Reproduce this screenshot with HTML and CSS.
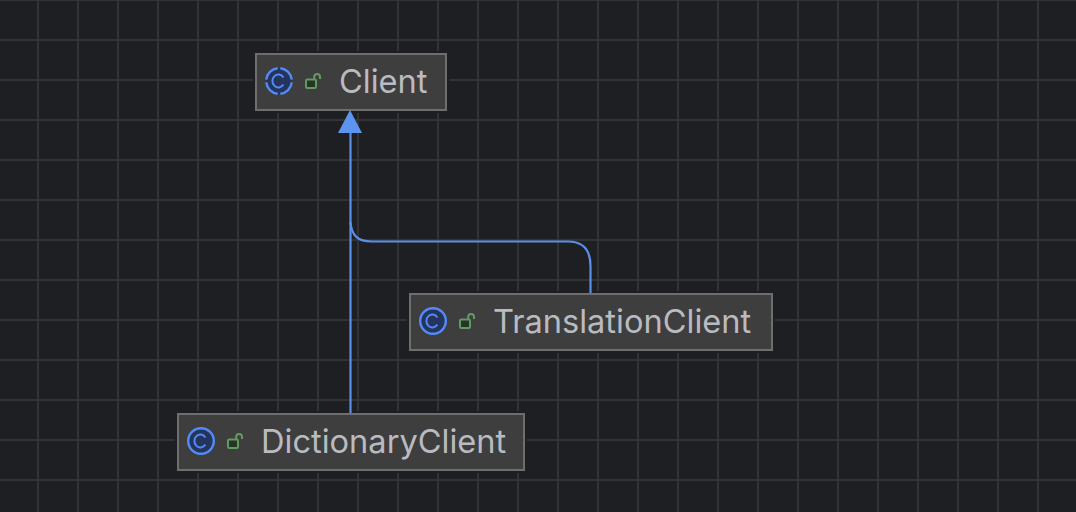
FILE: index.html
```html
<!DOCTYPE html>
<html lang="en">
<head>
<meta charset="utf-8">
<title>Class diagram</title>
<link rel="stylesheet" href="styles.css">
</head>
<body>
<main class="canvas">
  <div class="node node-client">
    <svg class="class-icon" width="28" height="28" viewBox="0 0 28 28" aria-hidden="true">
      <circle class="ring ring-dashed" cx="14" cy="14" r="12.800" pathLength="100"/>
      <path class="letter" d="M18.400 10.400A6 6.500 0 1 0 18.400 17.600"/>
    </svg>
    <svg class="lock-icon" width="18" height="18" viewBox="0 0 18 18" aria-hidden="true">
      <rect class="lock-body" x="1" y="6.500" width="10" height="8.500" rx="1.200"/>
      <path class="lock-bar" d="M9.200 6.500V3.900A2.900 2.900 0 0 1 15 3.900V6"/>
    </svg>
    <span class="label">Client</span>
  </div>

  <div class="node node-translation">
    <svg class="class-icon" width="28" height="28" viewBox="0 0 28 28" aria-hidden="true">
      <circle class="ring" cx="14" cy="14" r="12.800"/>
      <path class="letter" d="M18.400 10.400A6 6.500 0 1 0 18.400 17.600"/>
    </svg>
    <svg class="lock-icon" width="18" height="18" viewBox="0 0 18 18" aria-hidden="true">
      <rect class="lock-body" x="1" y="6.500" width="10" height="8.500" rx="1.200"/>
      <path class="lock-bar" d="M9.200 6.500V3.900A2.900 2.900 0 0 1 15 3.900V6"/>
    </svg>
    <span class="label">TranslationClient</span>
  </div>

  <div class="node node-dictionary">
    <svg class="class-icon" width="28" height="28" viewBox="0 0 28 28" aria-hidden="true">
      <circle class="ring" cx="14" cy="14" r="12.800"/>
      <path class="letter" d="M18.400 10.400A6 6.500 0 1 0 18.400 17.600"/>
    </svg>
    <svg class="lock-icon" width="18" height="18" viewBox="0 0 18 18" aria-hidden="true">
      <rect class="lock-body" x="1" y="6.500" width="10" height="8.500" rx="1.200"/>
      <path class="lock-bar" d="M9.200 6.500V3.900A2.900 2.900 0 0 1 15 3.900V6"/>
    </svg>
    <span class="label">DictionaryClient</span>
  </div>

  <svg class="edges" width="1076" height="512" viewBox="0 0 1076 512" aria-hidden="true">
    <path class="edge" d="M350.500 130V413"/>
    <path class="edge" d="M350.500 222C351.500 235 357 241.500 372 241.500H568C583 241.500 590.500 250 590.500 266V293"/>
    <path class="arrow" d="M350 110L362 133H338Z"/>
  </svg>
</main>
</body>
</html>
```
FILE: styles.css
```css
html, body {
  margin: 0;
  padding: 0;
  background: #1e1f22;
}

.canvas {
  position: relative;
  width: 1076px;
  height: 512px;
  overflow: hidden;
  background-color: #1e1f22;
  background-image:
    linear-gradient(to right, #323334 2px, transparent 2px),
    linear-gradient(to bottom, #323334 2px, transparent 2px);
  background-size: 40px 40px;
  background-position: 37px -1px;
}

.edges {
  position: absolute;
  left: 0;
  top: 0;
  pointer-events: none;
}

.edge {
  fill: none;
  stroke: #5a8fe8;
  stroke-width: 2.200;
}

.arrow {
  fill: #5c94f0;
}

.node {
  position: absolute;
  box-sizing: border-box;
  height: 58px;
  display: flex;
  align-items: center;
  background: #3e3e3e;
  border: 2px solid #6e6e6e;
  box-shadow: 0 0 0 2px #1e1f22;
}

.node-client {
  left: 255px;
  top: 53px;
  width: 192px;
}

.node-translation {
  left: 409px;
  top: 293px;
  width: 364px;
}

.node-dictionary {
  left: 177px;
  top: 413px;
  width: 348px;
}

.class-icon {
  flex: none;
  margin-left: 8px;
  margin-bottom: 2px;
}

.lock-icon {
  flex: none;
  margin-left: 12px;
}

.ring {
  fill: #25345a;
  stroke: #548af7;
  stroke-width: 2.400;
}

.ring-dashed {
  stroke-dasharray: 21.500 3.500;
  stroke-dashoffset: -1.750;
}

.letter {
  fill: none;
  stroke: #548af7;
  stroke-width: 2;
}

.lock-body {
  fill: #253627;
  stroke: #629a62;
  stroke-width: 2;
}

.lock-bar {
  fill: none;
  stroke: #629a62;
  stroke-width: 2;
}

.label {
  margin-left: 16px;
  margin-bottom: 2px;
  font-family: Inter, "Liberation Sans", sans-serif;
  font-size: 32.600px;
  line-height: 40px;
  color: #b9bbc1;
  white-space: nowrap;
}
```
